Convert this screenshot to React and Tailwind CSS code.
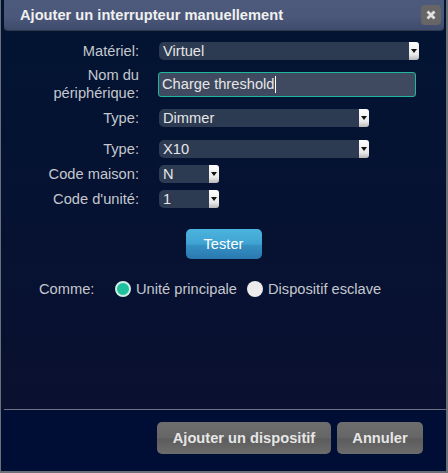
import React from "react";

function Arrow() {
  return (
    <span className="flex h-[18px] w-[10px] flex-col items-center justify-center rounded-r-[3px] bg-[linear-gradient(#ffffff,#e8e8e8_70%,#b8b8b8)]">
      <svg width="6" height="4" viewBox="0 0 6 4"><path d="M0 0h6L3 4z" fill="#111" /></svg>
    </span>
  );
}

function Select({ value, width }) {
  return (
    <div className={`flex h-[18px] items-center justify-between rounded-l-[5px] rounded-r-[3px] bg-[#2c3a52] pl-[4px] text-[#e6e6e6] ${width}`}>
      <span className="text-[14.67px] leading-[18px]">{value}</span>
      <Arrow />
    </div>
  );
}

function Label({ children }) {
  return <div className="ml-[10px] w-[128px] text-right text-[14.67px] leading-[18px] text-[#c4c8ce]">{children}</div>;
}

function Row({ label, className, children }) {
  return (
    <div className={`flex items-center gap-[20px] ${className}`}>
      <Label>{label}</Label>
      {children}
    </div>
  );
}

function GrayButton({ children, className }) {
  return (
    <button className={`h-[32px] rounded-[5px] bg-[linear-gradient(#6e6e6e,#666666_50%,#5c5c5c_52%,#6c6c6c)] text-[14.67px] font-bold text-[#e6e6e6] ${className}`}>
      {children}
    </button>
  );
}

export default function App() {
  return (
    <div className="flex h-[473px] w-[448px] flex-col bg-[#6b6f76] pt-0 pr-[2px] pb-[2px] pl-[1px] font-['Liberation_Sans',sans-serif]">
      <div className="flex flex-1 flex-col bg-[linear-gradient(#021433,#0a1030_410px,#000d34_410px)]">
        <div className="ml-[3px] mr-[2px] flex h-[31px] items-center justify-between rounded-b-[4px] border-b border-[#33384a] bg-[linear-gradient(#4d5a7c,#4c5879_55%,#3f4b6c)] pl-[16px] pr-[3px]">
          <span className="text-[14.67px] font-bold text-[#f0f0f0]">Ajouter un interrupteur manuellement</span>
          <span className="flex h-[20px] w-[20px] items-center justify-center rounded-[4px] bg-[#666666]">
            <svg width="10" height="10" viewBox="0 0 10 10"><path d="M1.5 1.5l7 7M8.5 1.5l-7 7" stroke="#e0e0e0" strokeWidth="2.8" /></svg>
          </span>
        </div>

        <Row label="Matériel:" className="mt-[11px]">
          <Select value="Virtuel" width="w-[260px]" />
        </Row>
        <Row label="Nom du périphérique:" className="mt-[6px]">
          <div className="ml-[-1px] flex h-[25px] w-[258px] items-center rounded-[3px] border border-[#1fb89a] bg-[#3f4a60] pl-[3px] text-[14.67px] text-[#e6e6e6]">
            Charge threshold<span className="ml-px h-[17px] w-px bg-white" />
          </div>
        </Row>
        <Row label="Type:" className="mt-[7px]">
          <Select value="Dimmer" width="w-[210px]" />
        </Row>
        <Row label="Type:" className="mt-[13px]">
          <Select value="X10" width="w-[210px]" />
        </Row>
        <Row label="Code maison:" className="mt-[7px]">
          <Select value="N" width="w-[60px]" />
        </Row>
        <Row label="Code d'unité:" className="mt-[7px]">
          <Select value="1" width="w-[60px]" />
        </Row>

        <div className="mt-[21px] flex justify-center">
          <button className="h-[30px] w-[76px] rounded-[5px] bg-[linear-gradient(#4bb4de,#3fa3d2_50%,#3590c2_55%,#2a78b0)] text-[14.67px] text-white">
            Tester
          </button>
        </div>

        <div className="mt-[21px] flex items-center pl-[38px] text-[14.67px] leading-[18px] text-[#c4c8ce]">
          <span className="w-[76px]">Comme:</span>
          <span className="h-[16px] w-[16px] rounded-full border-2 border-[#cdeee6] bg-[#1fc09e]" />
          <span className="ml-[5px]">Unité principale</span>
          <span className="ml-[10px] h-[16px] w-[16px] rounded-full bg-[#ececec]" />
          <span className="ml-[5px]">Dispositif esclave</span>
        </div>

        <div className="mt-auto ml-[3px] border-t border-[#6d7280]" />
        <div className="flex h-[61px] items-start justify-end gap-[6px] pt-[12px] pr-[23px]">
          <GrayButton className="w-[174px]">Ajouter un dispositif</GrayButton>
          <GrayButton className="w-[86px]">Annuler</GrayButton>
        </div>
      </div>
    </div>
  );
}
